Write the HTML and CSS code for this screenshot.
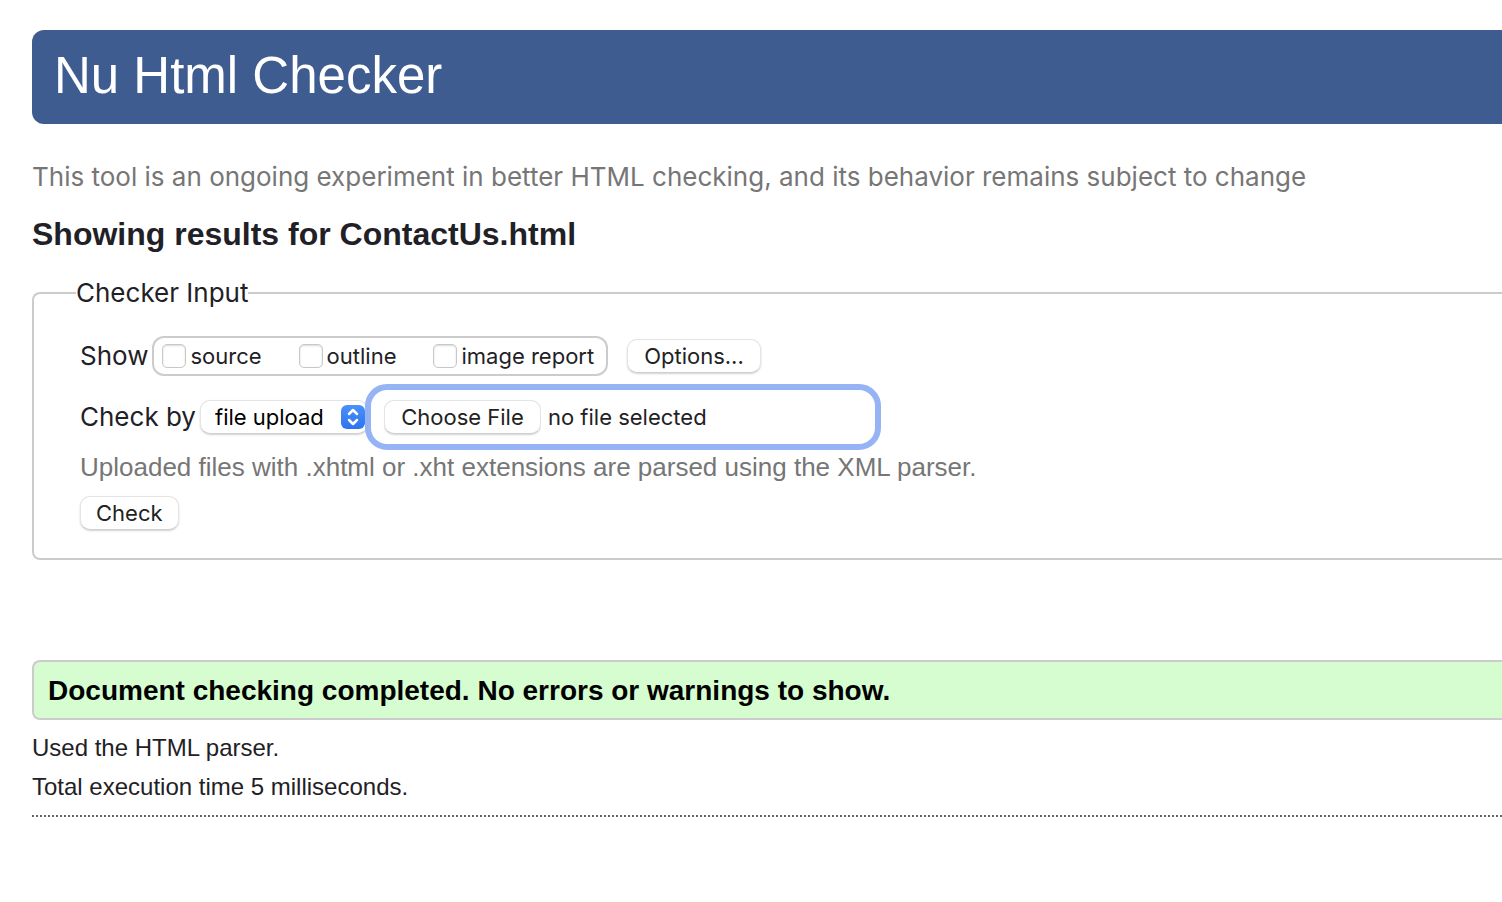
FILE: index.html
```html
<!DOCTYPE html>
<html lang="en">
<head>
<meta charset="utf-8">
<title>Showing results for ContactUs.html</title>
<link rel="stylesheet" href="styles.css">
</head>
<body>
<h1 class="banner">Nu Html Checker</h1>
<main>
  <p class="tagline">This tool is an ongoing experiment in better HTML checking, and its behavior remains subject to change</p>
  <h2 class="title">Showing results for ContactUs.html</h2>
  <form>
    <fieldset class="inputs">
      <legend class="legend">Checker Input</legend>
      <div class="row">
        <span id="show-label">Show</span>
        <div class="checks" role="group" aria-labelledby="show-label">
          <label class="check"><input class="box" type="checkbox">source</label>
          <label class="check"><input class="box" type="checkbox">outline</label>
          <label class="check"><input class="box" type="checkbox">image report</label>
        </div>
        <button class="button options" type="button">Options...</button>
      </div>
      <div class="row">
        <label for="method">Check by</label>
        <div class="method">
          <select class="select" id="method"><option>file upload</option></select>
          <svg class="arrows" viewBox="0 0 24 24" aria-hidden="true"><path d="M8 9 12 5 16 9M8 15 12 19 16 15"/></svg>
        </div>
        <label class="upload"><input class="file" type="file" aria-label="Choose File"><span>no file selected</span></label>
      </div>
      <p class="hint">Uploaded files with .xhtml or .xht extensions are parsed using the XML parser.</p>
      <button class="button" type="button">Check</button>
    </fieldset>
  </form>
  <p class="success">Document checking completed. No errors or warnings to show.</p>
  <div class="details">
    <p class="detail">Used the HTML parser.</p>
    <p class="detail">Total execution time 5 milliseconds.</p>
  </div>
</main>
</body>
</html>
```

FILE: styles.css
```css
* { box-sizing: border-box; }
body {
  margin: 0;
  padding: 30px 0 32px 32px;
  background: #fff;
  color: #1f2126;
  font: 26px/32px Inter, "Liberation Sans", sans-serif;
}
p { margin: 0; }
.banner {
  margin: 0;
  padding: 16px 22px 18px;
  border-radius: 12px 0 0 12px;
  background: #3f5c91;
  color: #fff;
  font: 51px/60px "Liberation Sans", Arial, sans-serif;
}
.tagline { margin-top: 37px; color: #767676; }
.title {
  margin: 21px 0 23px;
  font: bold 32px/40px "Liberation Sans", Arial, sans-serif;
}
.inputs {
  margin: 0;
  min-width: 0;
  padding: 27px 0 28px 46px;
  border: 2px solid #ccc;
  border-right: 0;
  border-radius: 8px 0 0 8px;
}
.legend { margin-left: -4px; padding: 0; }
.row { display: flex; align-items: center; gap: 4px; margin-bottom: 8px; }
.row + .row { margin-bottom: 0; }
.checks {
  display: flex;
  align-items: center;
  gap: 37px;
  height: 40px;
  padding: 0 12px 0 8px;
  border: 2px solid #ccc;
  border-radius: 12px;
  font-size: 22px;
}
.check { display: flex; align-items: center; gap: 4px; }
.box {
  appearance: none;
  width: 24px;
  height: 24px;
  margin: 0;
  border: 1px solid #c8c8c8;
  border-radius: 5px;
  background: #fff;
  box-shadow: inset 0 1px 2px rgba(0, 0, 0, .15);
}
.button, .select, .file::file-selector-button {
  appearance: none;
  height: 34px;
  margin: 0;
  padding: 0 15px;
  border: 1px solid #e4e4e4;
  border-bottom-color: #cfcfcf;
  border-radius: 10px;
  background: #fff;
  box-shadow: 0 1px 2px rgba(0, 0, 0, .18);
  color: #222;
  font: 22px/30px Inter, "Liberation Sans", sans-serif;
}
.button { display: block; }
.options { margin-left: 15px; padding: 0 16px; }
.method { display: grid; align-items: center; }
.select { grid-area: 1 / 1; width: 168px; padding: 0 14px; color: #000; }
.arrows {
  grid-area: 1 / 1;
  justify-self: end;
  width: 24px;
  height: 24px;
  margin-right: 3px;
  border-radius: 6px;
  background: linear-gradient(#4a91f8, #2f73f0);
  fill: none;
  stroke: #fff;
  stroke-width: 2.5;
  stroke-linecap: round;
  stroke-linejoin: round;
  pointer-events: none;
}
.upload {
  display: flex;
  align-items: center;
  gap: 7px;
  width: 516px;
  height: 66px;
  margin-left: -7px;
  padding-left: 13px;
  border: 6px solid rgba(135, 168, 244, .88);
  border-radius: 22px;
  font-size: 22px;
  z-index: 1;
}
.file { width: 157px; height: 38px; padding: 2px 0; font-size: 22px; color: transparent; overflow: hidden; }
.file::file-selector-button { width: 157px; }
.hint {
  margin: 1px 0 13px;
  color: #767676;
  font-family: "Liberation Sans", Arial, sans-serif;
}
.success {
  margin-top: 100px;
  padding: 13px 14px 11px;
  border: 2px solid #ccc;
  border-right: 0;
  border-radius: 8px 0 0 8px;
  background: #d6fdd0;
  color: #000;
  font: bold 28px/32px "Liberation Sans", Arial, sans-serif;
}
.details {
  padding: 8px 0 9px;
  border-bottom: 2px dotted #666;
  font: 24px/39px "Liberation Sans", Arial, sans-serif;
}
```
